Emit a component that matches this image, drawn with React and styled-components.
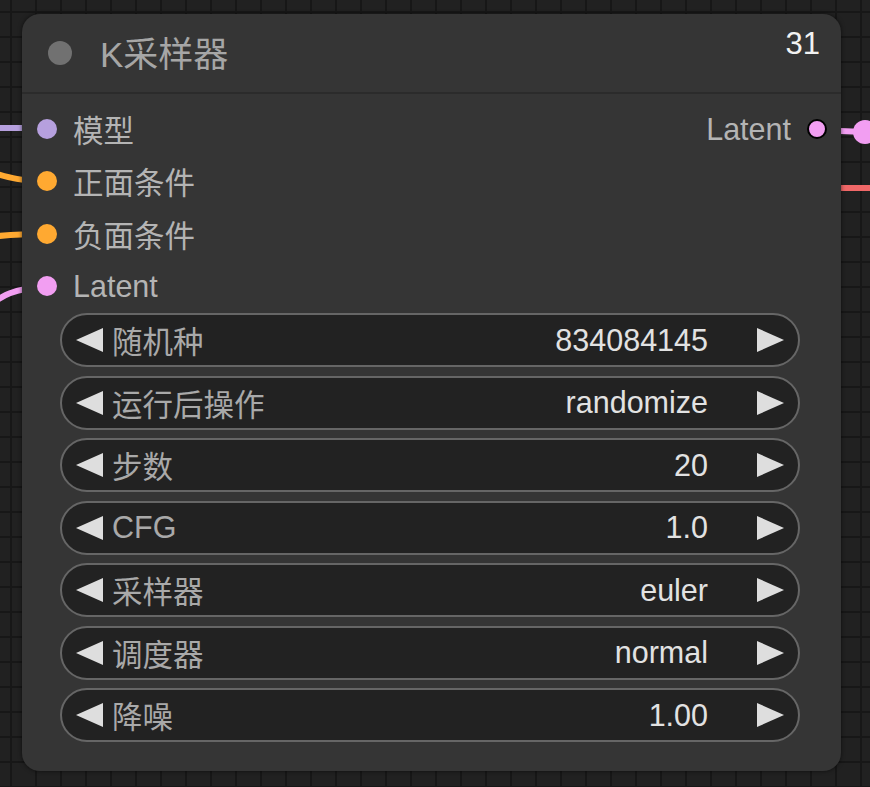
import React from "react";
import styled, { createGlobalStyle } from "styled-components";

const Global = createGlobalStyle`
  html, body { margin: 0; padding: 0; background: #202020; }
  body { font-family: "Liberation Sans", "Noto Sans CJK SC", sans-serif; }
`;

const Canvas = styled.div`
  position: relative;
  width: 870px;
  height: 787px;
  overflow: hidden;
  background-color: #212121;
  background-image:
    linear-gradient(#171717 2px, transparent 2px),
    linear-gradient(90deg, #171717 2px, transparent 2px);
  background-size: 25px 25px;
  background-position: 10px 11px;
`;

const Links = styled.svg`
  position: absolute;
  left: 0;
  top: 0;
  width: 870px;
  height: 787px;
`;

const Node = styled.div`
  position: absolute;
  left: 22px;
  top: 14px;
  width: 819px;
  height: 757px;
  background: #353535;
  border-radius: 18px;
  box-shadow: 0 0 4px rgba(0, 0, 0, 0.6);
  display: flex;
  flex-direction: column;
`;

const Title = styled.div`
  height: 78px;
  display: flex;
  align-items: center;
  padding: 0 21px 0 26px;
  border-bottom: 2px solid #2b2b2b;
`;

const TitleDot = styled.span`
  width: 24px;
  height: 24px;
  border-radius: 50%;
  background: #717171;
  flex: none;
`;

const TitleText = styled.span`
  margin-left: 28px;
  font-size: 35px;
  color: #a6a6a6;
  line-height: 1;
  padding-top: 2px;
`;

const NodeId = styled.span`
  margin-left: auto;
  align-self: flex-start;
  margin-top: 13px;
  font-size: 31px;
  line-height: 34px;
  color: #f2f2f2;
`;

const Slots = styled.div`
  padding-top: 9px;
  display: flex;
  flex-direction: column;
`;

const SlotRow = styled.div`
  height: 52.3px;
  display: flex;
  align-items: center;
  padding: 0 14px 0 15px;
`;

const Dot = styled.span`
  width: 20px;
  height: 20px;
  border-radius: 50%;
  background: ${(p) => p.$color};
  box-sizing: border-box;
  border: ${(p) => (p.$out ? "2px solid #000" : "none")};
  flex: none;
`;

const SlotLabel = styled.span`
  font-size: 30.5px;
  color: #b4b4b4;
  margin: ${(p) => (p.$out ? "0 16px 0 auto" : "0 0 0 16px")};
`;

const Widgets = styled.div`
  display: flex;
  flex-direction: column;
  gap: 8.5px;
  padding: 1px 41px 0 38px;
`;

const Widget = styled.div`
  height: 54px;
  box-sizing: border-box;
  border: 2px solid #666;
  border-radius: 27px;
  background: #222;
  display: flex;
  align-items: center;
  padding: 0 14px;
  font-size: 30.5px;
`;

const Arrow = styled.span`
  width: 0;
  height: 0;
  border-top: 12px solid transparent;
  border-bottom: 12px solid transparent;
  ${(p) =>
    p.$right
      ? "border-left: 27px solid #dedede;"
      : "border-right: 27px solid #dedede;"}
  flex: none;
`;

const WLabel = styled.span`
  margin-left: 9px;
  color: #a9a9a9;
`;

const WValue = styled.span`
  margin-left: auto;
  margin-right: 49px;
  color: #e2e2e2;
`;

const widgets = [
  ["随机种", "834084145"],
  ["运行后操作", "randomize"],
  ["步数", "20"],
  ["CFG", "1.0"],
  ["采样器", "euler"],
  ["调度器", "normal"],
  ["降噪", "1.00"],
];

const inputs = [
  ["模型", "#b6a0de"],
  ["正面条件", "#ffa931"],
  ["负面条件", "#ffa931"],
  ["Latent", "#f29ef2"],
];

export default function App() {
  return (
    <>
      <Global />
      <Canvas>
        <Links viewBox="0 0 870 787">
          <path d="M-10 128 L47 128" stroke="#b6a0de" strokeWidth="6" fill="none" />
          <path d="M-10 172 C5 176 15 181 47 181" stroke="#ffa931" strokeWidth="6" fill="none" />
          <path d="M-10 237 C5 235 15 234 47 234" stroke="#ffa931" strokeWidth="6" fill="none" />
          <path d="M-10 305 C2 296 12 289 47 286" stroke="#f29ef2" strokeWidth="6" fill="none" />
          <path d="M815 130 L865 132" stroke="#f29ef2" strokeWidth="6" fill="none" />
          <circle cx="865" cy="132" r="12" fill="#f29ef2" />
          <path d="M830 188 L880 188" stroke="#f06868" strokeWidth="6" fill="none" />
        </Links>
        <Node>
          <Title>
            <TitleDot />
            <TitleText>K采样器</TitleText>
            <NodeId>31</NodeId>
          </Title>
          <Slots>
            {inputs.map(([label, color], i) => (
              <SlotRow key={label}>
                <Dot $color={color} />
                <SlotLabel>{label}</SlotLabel>
                {i === 0 && (
                  <>
                    <SlotLabel $out>Latent</SlotLabel>
                    <Dot $color="#f29ef2" $out />
                  </>
                )}
              </SlotRow>
            ))}
          </Slots>
          <Widgets>
            {widgets.map(([label, value]) => (
              <Widget key={label}>
                <Arrow />
                <WLabel>{label}</WLabel>
                <WValue>{value}</WValue>
                <Arrow $right />
              </Widget>
            ))}
          </Widgets>
        </Node>
      </Canvas>
    </>
  );
}
